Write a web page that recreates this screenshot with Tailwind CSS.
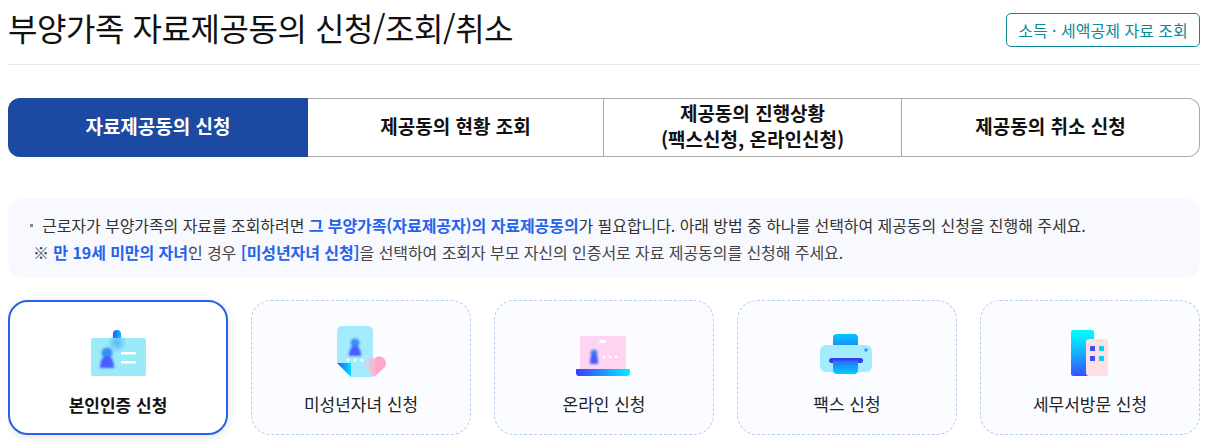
<!DOCTYPE html>
<html lang="ko">
<head>
    <meta charset="UTF-8">
    <title>부양가족 자료제공동의 신청</title>
    <script src="https://cdn.jsdelivr.net/npm/@tailwindcss/browser@4"></script>
</head>
<body class="bg-white overflow-hidden font-['Noto_Sans_CJK_KR','Noto_Sans',sans-serif]">
    <div class="w-[1192px] h-[446px] ml-2 overflow-hidden">
        <!-- Title -->
        <header class="h-[65px] flex items-start justify-between border-b border-[#e5e8f0]">
            <h1 class="text-[32px] leading-[40px] mt-[7px] text-[#111] tracking-[-0.45px] font-normal">부양가족 자료제공동의 신청/조회/취소</h1>
            <a href="#" class="mt-[13px] w-[194px] h-[34px] flex items-center justify-center border border-[#0b8a96] rounded-[5px] text-[#0b8a96] text-[16px]">소득 · 세액공제 자료 조회</a>
        </header>

        <!-- Tabs -->
        <nav class="mt-[33px] h-[59px] flex text-[19px] leading-[26px] font-semibold text-[#111] text-center">
            <a href="#" class="w-[300px] pb-1 flex items-center justify-center bg-[#1c4aa2] text-white rounded-l-[12px]">자료제공동의 신청</a>
            <a href="#" class="w-[296px] pb-1 flex items-center justify-center border-y border-r border-[#aaa]">제공동의 현황 조회</a>
            <a href="#" class="w-[298px] pb-1 flex items-center justify-center border-y border-r border-[#aaa]">제공동의 진행상황<br>(팩스신청, 온라인신청)</a>
            <a href="#" class="w-[298px] pb-1 flex items-center justify-center border-y border-r border-[#aaa] rounded-r-[12px]">제공동의 취소 신청</a>
        </nav>

        <!-- Notice -->
        <section class="mt-[41px] h-[80px] bg-[#f8f9fe] rounded-[16px] pl-[22px] pt-[14px] text-[16px] leading-[27px] text-[#333] tracking-[-0.07px]">
            <p class="flex items-center"><span class="w-[3px] h-[3px] bg-[#888] mr-[9px]"></span><span>근로자가 부양가족의 자료를 조회하려면 <b class="font-semibold text-[#2563eb]">그 부양가족(자료제공자)의 자료제공동의</b>가 필요합니다. 아래 방법 중 하나를 선택하여 제공동의 신청을 진행해 주세요.</span></p>
            <p class="pl-[3px] text-[#444]">※ <b class="font-semibold text-[#2563eb]">만 19세 미만의 자녀</b>인 경우 <b class="font-semibold text-[#2563eb]">[미성년자녀 신청]</b>을 선택하여 조회자 부모 자신의 인증서로 자료 제공동의를 신청해 주세요.</p>
        </section>

        <!-- Method cards -->
        <section class="mt-[22px] flex justify-between text-[17px] leading-[22px] text-[#222]">
            <a href="#" class="w-[220px] h-[135px] bg-white border-2 border-[#2563eb] rounded-[20px] shadow-[0_2px_10px_rgba(0,0,0,0.12)] flex flex-col items-center font-semibold text-[#111]">
                <svg class="mt-[28px]" width="60" height="50" viewBox="0 0 60 50">
                    <defs>
                        <linearGradient id="clip" x1="0" y1="0" x2="1" y2="0"><stop offset="0" stop-color="#2f4bff"/><stop offset="1" stop-color="#00c8ff"/></linearGradient>
                        <radialGradient id="glow"><stop offset="0" stop-color="#3aa0f5" stop-opacity="0.7"/><stop offset="1" stop-color="#3aa0f5" stop-opacity="0"/></radialGradient>
                        <filter id="soft" x="-30%" y="-30%" width="160%" height="160%"><feGaussianBlur stdDeviation="0.8"/></filter>
                    </defs>
                    <rect x="25" y="0" width="8" height="18" rx="4" fill="url(#clip)"/>
                    <rect x="3" y="8" width="55" height="38" rx="2" fill="#9aeafa"/>
                    <circle cx="29" cy="13" r="10" fill="url(#glow)"/>
                    <g filter="url(#soft)">
                        <circle cx="19" cy="23" r="5.5" fill="#3a8cf5"/>
                        <path d="M12 38c0-8 3-12 7-12s7 4 7 12z" fill="#4a5cff"/>
                    </g>
                    <rect x="33" y="22" width="15" height="2.5" fill="#fff"/>
                    <rect x="33" y="31" width="15" height="2.5" fill="#fff"/>
                </svg>
                <span class="mt-[14px]">본인인증 신청</span>
            </a>
            <a href="#" class="w-[220px] h-[135px] bg-[#fbfcff] border border-dashed border-[#b9cdf0] rounded-[20px] flex flex-col items-center">
                <svg class="mt-[24px]" width="52" height="52" viewBox="0 0 52 52">
                    <defs>
                        <linearGradient id="fold" x1="0" y1="0" x2="1" y2="0"><stop offset="0" stop-color="#2f4bff"/><stop offset="1" stop-color="#00e0ff"/></linearGradient>
                        <linearGradient id="heartFade" x1="0" y1="0" x2="1" y2="0"><stop offset="0" stop-color="#ffc4d6" stop-opacity="0.3"/><stop offset="0.55" stop-color="#ffa6c9"/></linearGradient>
                    </defs>
                    <path d="M2 6a5 5 0 0 1 5-5h26a5 5 0 0 1 5 5v46H16L2 38z" fill="#a2ecfd"/>
                    <path d="M2 38h14v14z" fill="url(#fold)"/>
                    <g filter="url(#soft)">
                        <circle cx="20" cy="18" r="4.5" fill="#3a8cf5"/>
                        <path d="M14 31c0-6 2-10 6-10s6 4 6 10z" fill="#4a5cff"/>
                    </g>
                    <circle cx="13" cy="35" r="1.5" fill="#fff"/><circle cx="20" cy="35" r="1.5" fill="#fff"/><circle cx="27" cy="35" r="1.5" fill="#fff"/>
                    <path d="M39 52L29 42A7.5 7.5 0 0 1 39 33.5A7 7 0 0 1 50 42Z" fill="url(#heartFade)"/>
                </svg>
                <span class="mt-[16px] font-normal">미성년자녀 신청</span>
            </a>
            <a href="#" class="w-[220px] h-[135px] bg-[#fbfcff] border border-dashed border-[#b9cdf0] rounded-[20px] flex flex-col items-center">
                <svg class="mt-[24px]" width="56" height="52" viewBox="0 0 56 52">
                    <defs>
                        <linearGradient id="base" x1="0" y1="0" x2="1" y2="0"><stop offset="0" stop-color="#3a3cff"/><stop offset="1" stop-color="#00f0ff"/></linearGradient>
                    </defs>
                    <rect x="4" y="11" width="46" height="35" rx="2" fill="#ffd4f3"/>
                    <rect x="23" y="15" width="7" height="3" rx="1.5" fill="#fff"/>
                    <g filter="url(#soft)">
                        <circle cx="18" cy="28" r="3.5" fill="#3a8cf5"/>
                        <path d="M14 39c0-7 1-11 4-11s4 4 4 11z" fill="#4a5cff"/>
                    </g>
                    <circle cx="28" cy="32" r="1.5" fill="#fff"/><circle cx="34" cy="32" r="1.5" fill="#fff"/><circle cx="40" cy="32" r="1.5" fill="#fff"/>
                    <path d="M0 45a1 1 0 0 1 1-1h52a1 1 0 0 1 1 1v3a3 3 0 0 1-3 3H3a3 3 0 0 1-3-3z" fill="url(#base)"/>
                </svg>
                <span class="mt-[16px] font-normal">온라인 신청</span>
            </a>
            <a href="#" class="w-[220px] h-[135px] bg-[#fbfcff] border border-dashed border-[#b9cdf0] rounded-[20px] flex flex-col items-center">
                <svg class="mt-[24px]" width="54" height="52" viewBox="0 0 54 52">
                    <defs>
                        <linearGradient id="paper" x1="0" y1="0" x2="0" y2="1"><stop offset="0" stop-color="#00c4ff"/><stop offset="1" stop-color="#2a6cff"/></linearGradient>
                        <linearGradient id="paperDown" x1="0" y1="0" x2="0" y2="1"><stop offset="0" stop-color="#2a6cff"/><stop offset="1" stop-color="#00d0ff"/></linearGradient>
                    </defs>
                    <rect x="13" y="9" width="25" height="20" rx="4" fill="url(#paper)"/>
                    <rect x="0" y="20" width="52" height="27" rx="6" fill="#a2ecfd"/>
                    <rect x="9" y="33" width="34" height="5" rx="2.5" fill="#3a3cf0"/>
                    <path d="M13 35.5h25V45a4 4 0 0 1-4 4H17a4 4 0 0 1-4-4z" fill="url(#paperDown)"/>
                    <circle cx="46" cy="25" r="1.7" fill="#2a8cff"/>
                </svg>
                <span class="mt-[16px] font-normal">팩스 신청</span>
            </a>
            <a href="#" class="w-[220px] h-[135px] bg-[#fbfcff] border border-dashed border-[#b9cdf0] rounded-[20px] flex flex-col items-center">
                <svg class="mt-[24px]" width="40" height="52" viewBox="0 0 40 52">
                    <defs>
                        <linearGradient id="tower" x1="0" y1="0" x2="0" y2="1"><stop offset="0.1" stop-color="#00f6ff"/><stop offset="1" stop-color="#3451ff"/></linearGradient>
                    </defs>
                    <rect x="1" y="5" width="23" height="46" rx="2.5" fill="url(#tower)"/>
                    <rect x="16" y="14" width="22" height="37" rx="3" fill="#ffdfe2"/>
                    <rect x="20" y="21" width="5" height="5" rx="0.5" fill="#3a4cff"/>
                    <rect x="29" y="21" width="5" height="5" rx="0.5" fill="#00d8f0"/>
                    <rect x="20" y="31" width="5" height="5" rx="0.5" fill="#3a4cff"/>
                    <rect x="29" y="31" width="5" height="5" rx="0.5" fill="#00d8f0"/>
                </svg>
                <span class="mt-[16px] font-normal">세무서방문 신청</span>
            </a>
        </section>
    </div>
</body>
</html>
